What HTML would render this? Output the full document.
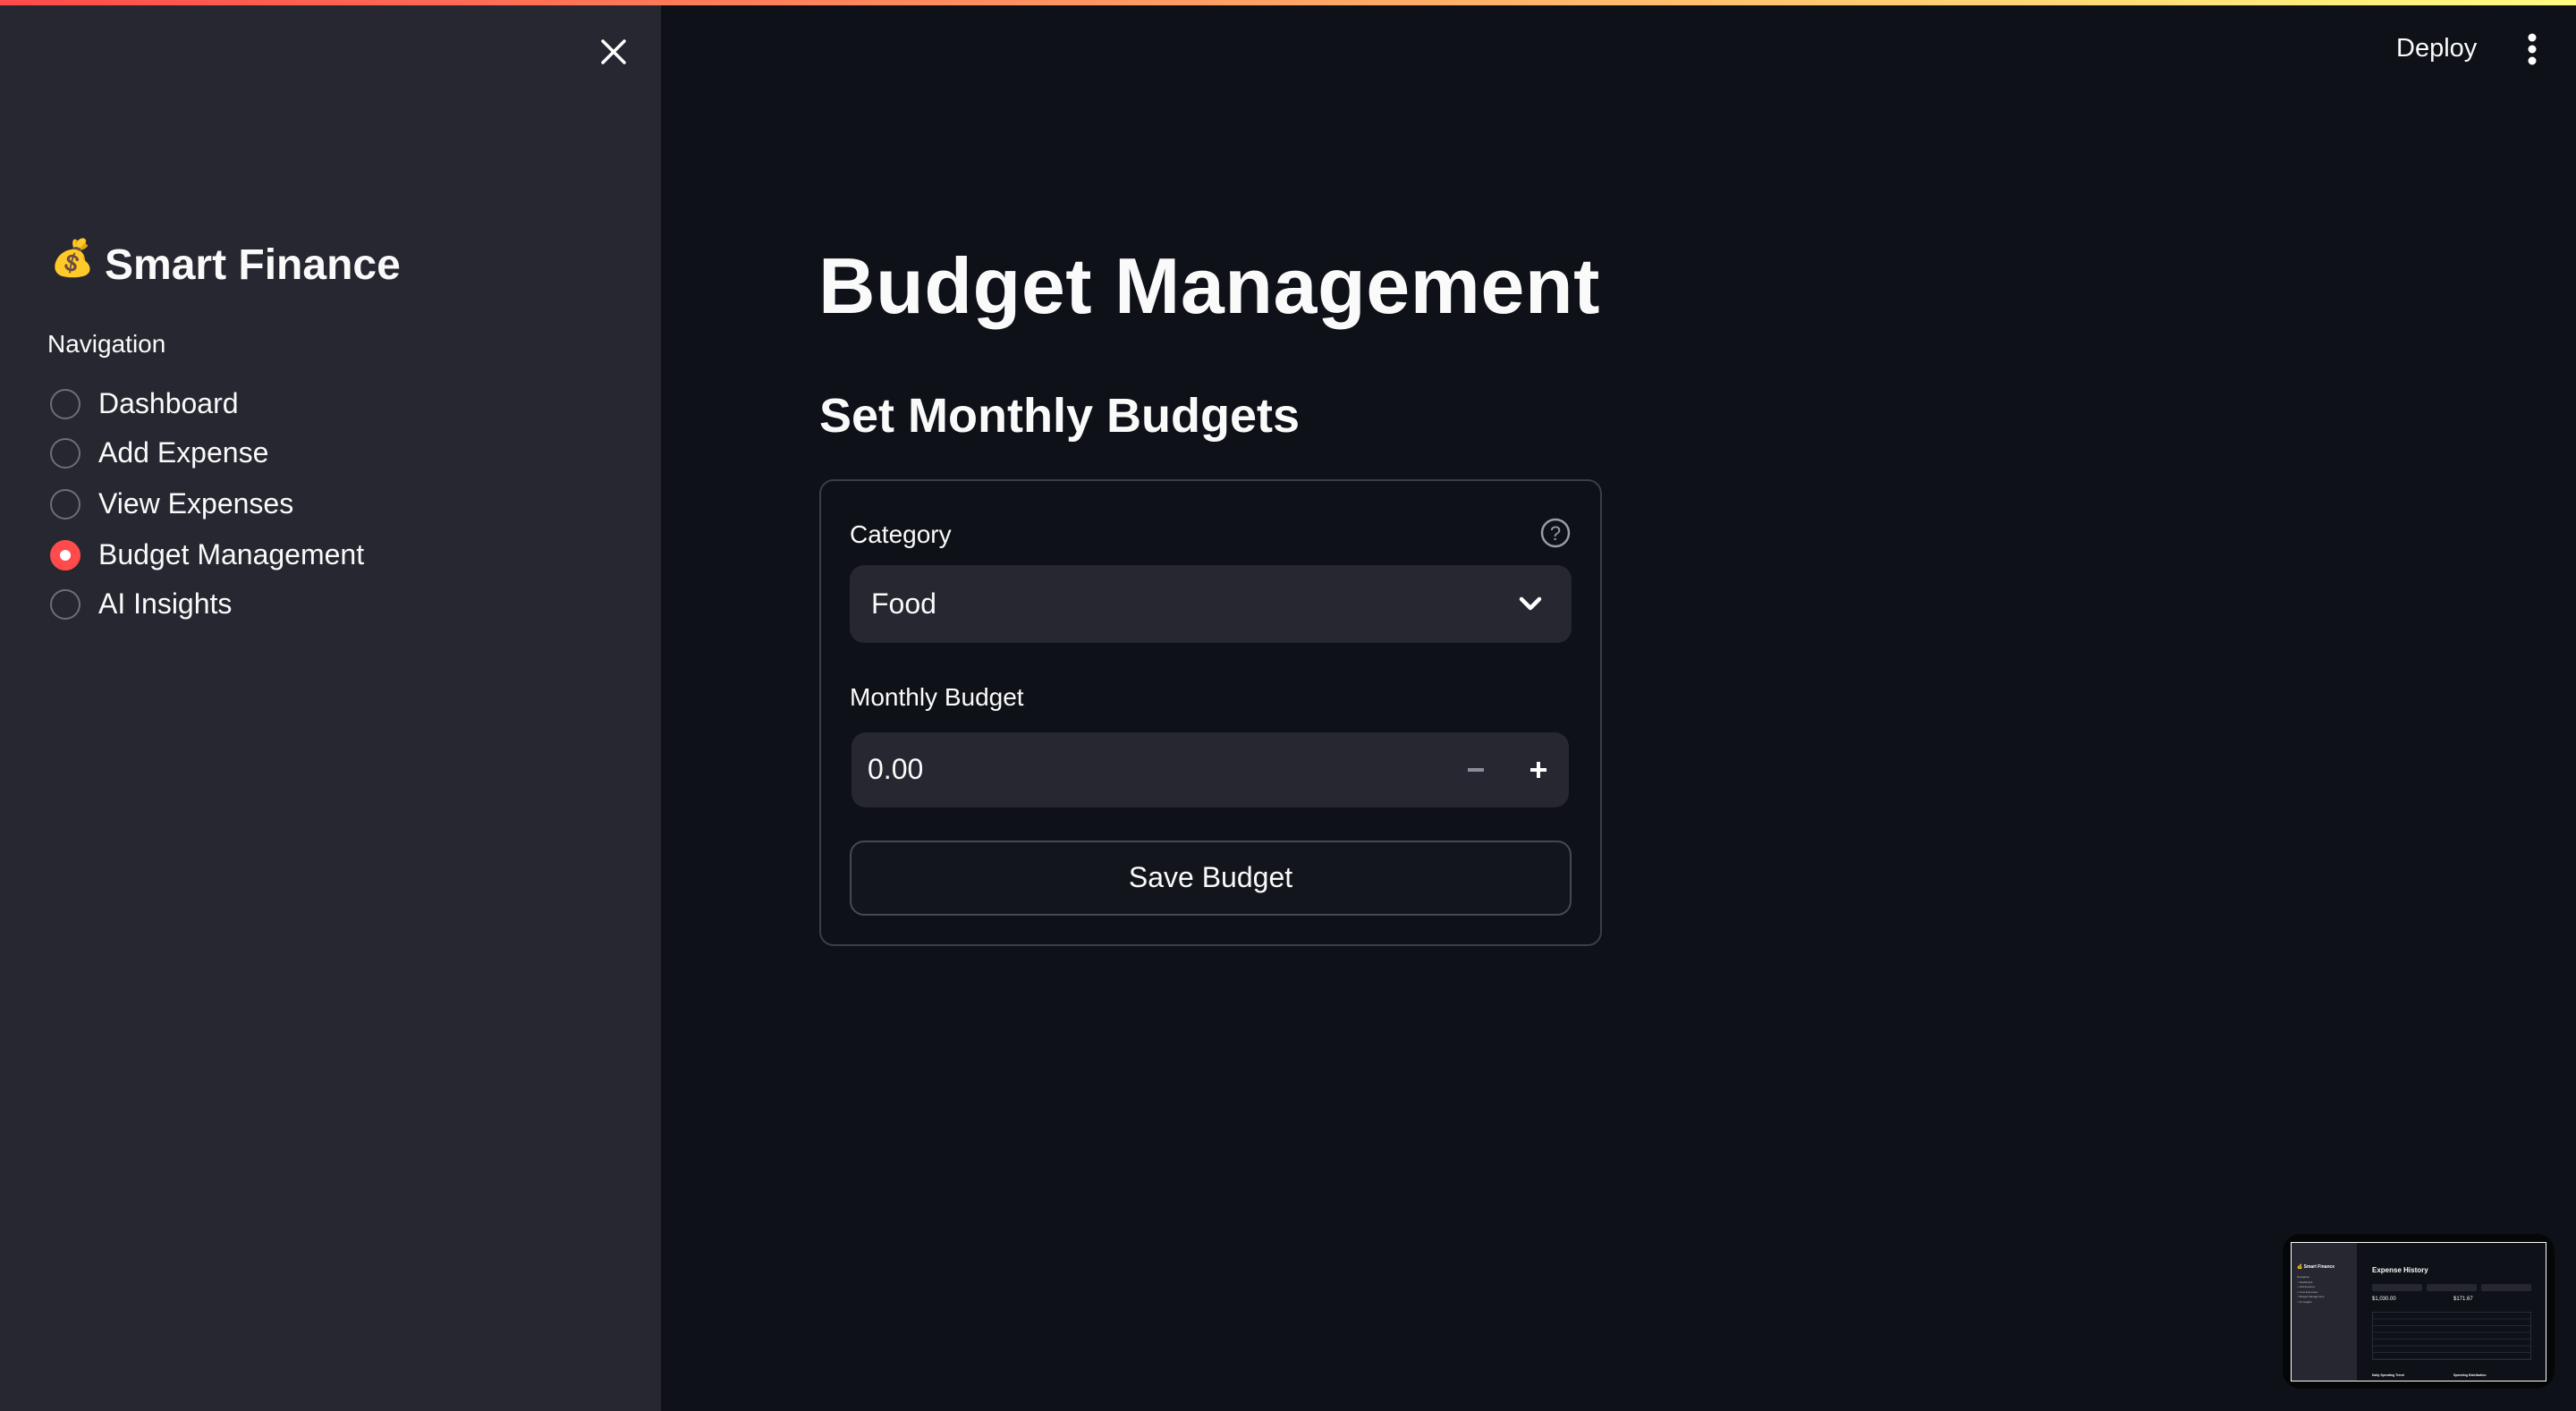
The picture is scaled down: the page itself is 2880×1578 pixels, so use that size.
<!DOCTYPE html>
<html><head><meta charset="utf-8">
<style>
*{margin:0;padding:0;box-sizing:border-box}
html,body{width:2880px;height:1578px;overflow:hidden;background:#0e1117;font-family:"Liberation Sans","Noto Sans CJK JP",sans-serif;color:#fafafa}
.abs{position:absolute;white-space:nowrap;line-height:normal}
#top{position:absolute;left:0;top:0;width:2880px;height:6px;background:linear-gradient(90deg,#ff4b4b,#fffd80)}
#side{position:absolute;left:0;top:6px;width:739px;height:1572px;background:#262730}
.radio{position:absolute;left:56px;width:34px;height:34px;border-radius:50%;border:2px solid #6c6e78}
.radio.on{background:#ff4b4b;border-color:#ff4b4b}
.radio.on::after{content:"";position:absolute;left:9px;top:9px;width:12px;height:12px;border-radius:50%;background:#fff}
.lbl{font-size:32px;left:110px}
.box{position:absolute;border-radius:16px}
</style></head><body>
<div id="top"></div>
<div id="side"></div>
<svg class="abs" style="left:670px;top:42px" width="32" height="32" viewBox="0 0 32 32"><path d="M4 4L28 28M28 4L4 28" stroke="#fff" stroke-width="3.5" stroke-linecap="round"/></svg>
<div class="abs" style="left:56px;top:265px;font-size:40px">💰</div>
<div class="abs" style="left:117px;top:269px;font-size:48px;font-weight:bold">Smart Finance</div>
<div class="abs" style="left:53px;top:369px;font-size:28px">Navigation</div>
<div class="radio" style="top:435px"></div><div class="abs lbl" style="top:433px">Dashboard</div>
<div class="radio" style="top:490px"></div><div class="abs lbl" style="top:488px">Add Expense</div>
<div class="radio" style="top:547px"></div><div class="abs lbl" style="top:545px">View Expenses</div>
<div class="radio on" style="top:604px"></div><div class="abs lbl" style="top:602px">Budget Management</div>
<div class="radio" style="top:659px"></div><div class="abs lbl" style="top:657px">AI Insights</div>

<div class="abs" style="left:2679px;top:38px;font-size:29px">Deploy</div>
<svg class="abs" style="left:2822px;top:36px" width="18" height="40"><circle cx="9" cy="6" r="4.5" fill="#fff"/><circle cx="9" cy="19" r="4.5" fill="#fff"/><circle cx="9" cy="32" r="4.5" fill="#fff"/></svg>

<div class="abs" style="left:915px;top:269px;font-size:88px;font-weight:bold;letter-spacing:0.5px">Budget Management</div>
<div class="abs" style="left:916px;top:434px;font-size:54px;font-weight:bold">Set Monthly Budgets</div>

<div class="box" style="left:916px;top:536px;width:875px;height:522px;border:2px solid #3b3d48"></div>
<div class="abs" style="left:950px;top:582px;font-size:28px">Category</div>
<svg class="abs" style="left:1722px;top:579px" width="34" height="34" viewBox="0 0 34 34"><circle cx="17" cy="17" r="15" fill="none" stroke="#9a9ca4" stroke-width="2.5"/><text x="17" y="25" text-anchor="middle" font-size="22" fill="#9a9ca4" font-family="Liberation Sans">?</text></svg>
<div class="box" style="left:950px;top:632px;width:807px;height:87px;background:#262730"></div>
<div class="abs" style="left:974px;top:657px;font-size:32px">Food</div>
<svg class="abs" style="left:1698px;top:666px" width="26" height="18" viewBox="0 0 26 18"><path d="M3 4L13 14L23 4" fill="none" stroke="#fff" stroke-width="4.5" stroke-linecap="round" stroke-linejoin="round"/></svg>
<div class="abs" style="left:950px;top:764px;font-size:28px">Monthly Budget</div>
<div class="box" style="left:952px;top:819px;width:802px;height:84px;background:#262730"></div>
<div class="abs" style="left:970px;top:842px;font-size:32px">0.00</div>
<div class="abs" style="left:1641px;top:859px;width:18px;height:4px;background:#8a8c98"></div>
<div class="abs" style="left:1711px;top:859px;width:18px;height:4px;background:#fff"></div>
<div class="abs" style="left:1718px;top:852px;width:4px;height:18px;background:#fff"></div>
<div class="box" style="left:950px;top:940px;width:807px;height:84px;border:2px solid #464853;background:#13151d"></div>
<div class="abs" style="left:950px;top:963px;width:807px;text-align:center;font-size:32px">Save Budget</div>

<div class="box" style="left:2552px;top:1380px;width:304px;height:173px;background:#050608;border-radius:20px"></div>
<div class="abs" style="left:2561px;top:1389px;width:286px;height:156px;border:1.5px solid #fff;background:#0e1117;overflow:hidden">
 <div style="position:absolute;left:0;top:0;width:73px;height:156px;background:#262730"></div>
 <div style="position:absolute;left:6px;top:24px;font-size:5px;font-weight:bold">💰 Smart Finance</div>
 <div style="position:absolute;left:6px;top:36px;width:30px;height:30px;font-size:3px;color:#bbb;line-height:5.5px">Navigation<br>○ Dashboard<br>○ Add Expense<br><span style="color:#ff4b4b">●</span> View Expenses<br>○ Budget Management<br>○ AI Insights</div>
 <div style="position:absolute;left:90px;top:26px;font-size:8px;font-weight:bold">Expense History</div>
 <div style="position:absolute;left:90px;top:46px;width:56px;height:8px;background:#262730;border-radius:2px"></div>
 <div style="position:absolute;left:151px;top:46px;width:56px;height:8px;background:#262730;border-radius:2px"></div>
 <div style="position:absolute;left:212px;top:46px;width:56px;height:8px;background:#262730;border-radius:2px"></div>
 <div style="position:absolute;left:90px;top:60px;font-size:6px">$1,030.00</div>
 <div style="position:absolute;left:181px;top:60px;font-size:6px">$171.67</div>
 <div style="position:absolute;left:90px;top:77px;width:178px;height:54px;border:1px solid #2a2c36;background:repeating-linear-gradient(#0e1117 0 6.5px,#262730 6.5px 7.5px)"></div>
 <div style="position:absolute;left:90px;top:146px;font-size:3.5px;font-weight:bold">Daily Spending Trend</div>
 <div style="position:absolute;left:181px;top:146px;font-size:3.5px;font-weight:bold">Spending Distribution</div>
</div>
</body></html>
